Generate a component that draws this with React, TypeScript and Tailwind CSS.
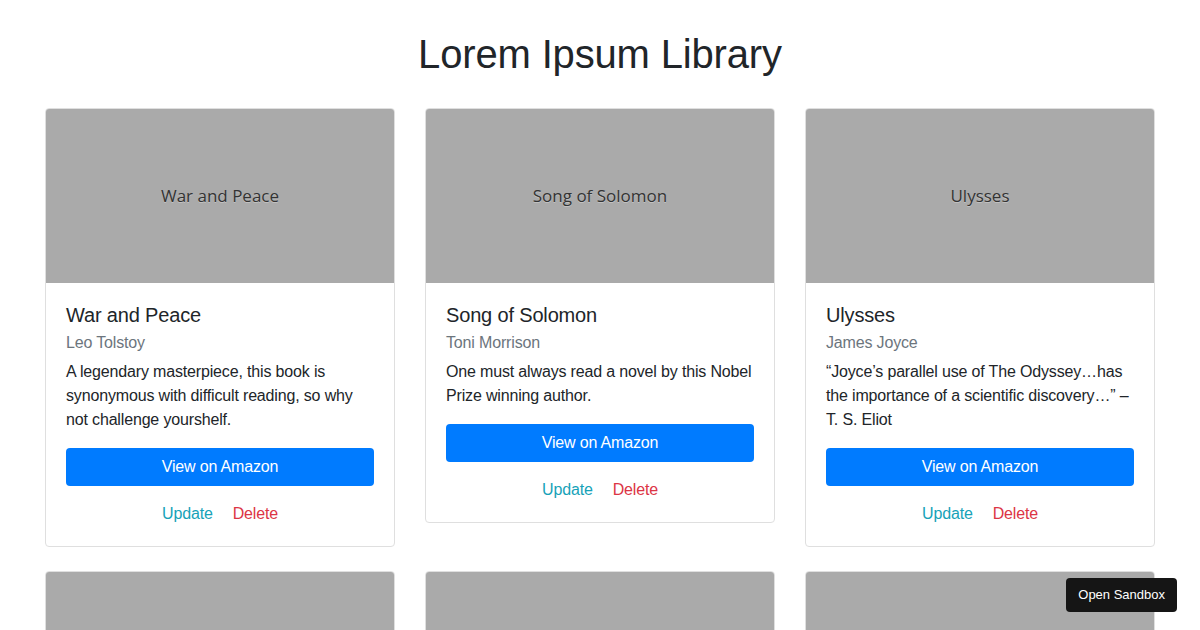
import React from "react";

type Book = { title: string; author: string; desc: string };

const books: Book[] = [
  {
    title: "War and Peace",
    author: "Leo Tolstoy",
    desc: "A legendary masterpiece, this book is synonymous with difficult reading, so why not challenge yourshelf.",
  },
  {
    title: "Song of Solomon",
    author: "Toni Morrison",
    desc: "One must always read a novel by this Nobel Prize winning author.",
  },
  {
    title: "Ulysses",
    author: "James Joyce",
    desc: "\u201CJoyce\u2019s parallel use of The Odyssey\u2026has the importance of a scientific discovery\u2026\u201D \u2013 T. S. Eliot",
  },
  {
    title: "The Great Gatsby",
    author: "F. Scott Fitzgerald",
    desc: "A classic of American literature set in the Jazz Age.",
  },
  {
    title: "Moby Dick",
    author: "Herman Melville",
    desc: "The epic tale of Captain Ahab and the white whale.",
  },
  {
    title: "Lolita",
    author: "Vladimir Nabokov",
    desc: "A controversial and brilliantly written novel.",
  },
];

function Card({ b }: { b: Book }) {
  return (
    <div className="border border-[#dfdfdf] rounded-[4px] overflow-hidden bg-white flex flex-col">
      <div className="h-[174px] bg-[#aaaaaa] flex items-center justify-center">
        <span
          className="text-[17px] text-[#333333] tracking-normal"
          style={{ fontFamily: '"Open Sans", "Noto Sans", sans-serif', textShadow: "0 1px 0 rgba(255,255,255,0.3)" }}
        >
          {b.title}
        </span>
      </div>
      <div className="p-5 flex flex-col">
        <h5 className="text-[20px] leading-[24px] text-[#212529] mb-3">{b.title}</h5>
        <h6 className="text-[16px] leading-[19px] text-[#6c757d] -mt-[6px] mb-2">{b.author}</h6>
        <p className="text-[16px] leading-[24px] text-[#212529] mb-4">{b.desc}</p>
        <a className="block h-[38px] leading-[38px] text-center text-white text-[16px] bg-[#007bff] rounded-[4px]">
          View on Amazon
        </a>
        <div className="mt-4 flex justify-center gap-5 text-[16px] leading-[24px]">
          <span className="text-[#17a2b8]">Update</span>
          <span className="text-[#dc3545]">Delete</span>
        </div>
      </div>
    </div>
  );
}

export default function App() {
  return (
    <div
      className="min-h-[630px] bg-white tracking-[-0.01em]"
      style={{ fontFamily: '"Liberation Sans", Arial, Helvetica, sans-serif' }}
    >
      <div className="max-w-[1140px] mx-auto px-[15px]">
        <h1 className="text-[40px] leading-[48px] text-center text-[#212529] pt-[30px] mb-[30px]">
          Lorem Ipsum Library
        </h1>
        <div className="grid grid-cols-3 gap-x-[30px] gap-y-6 items-start">
          {books.map((b) => (
            <Card key={b.title} b={b} />
          ))}
        </div>
      </div>
      <div className="fixed right-[23px] bottom-[18px] h-[34px] px-3 flex items-center rounded-[4px] bg-[#151515] text-white text-[13px] tracking-normal">
        Open Sandbox
      </div>
    </div>
  );
}
